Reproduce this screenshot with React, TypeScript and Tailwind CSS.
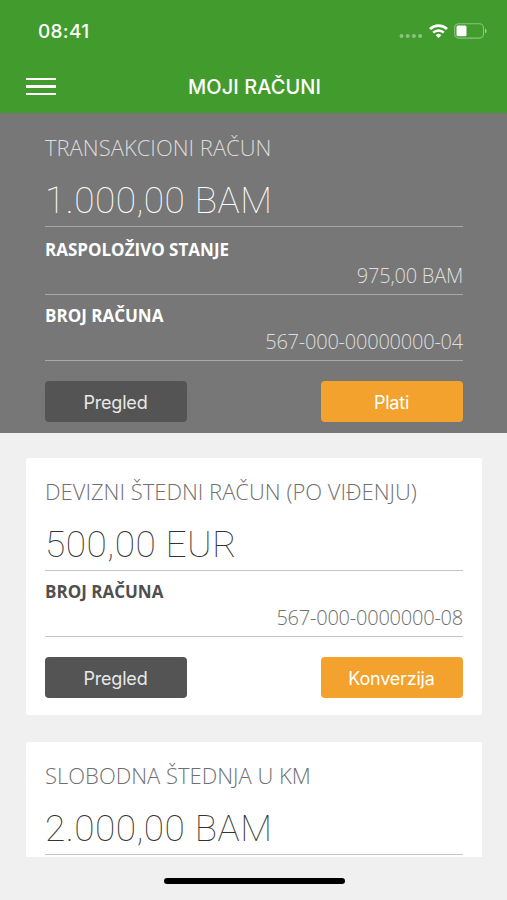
import type { ReactNode } from "react";
import clsx from "clsx";

interface Detail {
  label: string;
  value: string;
}

interface Account {
  name: string;
  balance: string;
  details: Detail[];
  action?: string;
}

const mainAccount: Account = {
  name: "TRANSAKCIONI RAČUN",
  balance: "1.000,00 BAM",
  details: [
    { label: "RASPOLOŽIVO STANJE", value: "975,00 BAM" },
    { label: "BROJ RAČUNA", value: "567-000-00000000-04" },
  ],
  action: "Plati",
};

const savings: Account[] = [
  {
    name: "DEVIZNI ŠTEDNI RAČUN (PO VIĐENJU)",
    balance: "500,00 EUR",
    details: [{ label: "BROJ RAČUNA", value: "567-000-0000000-08" }],
    action: "Konverzija",
  },
  {
    name: "SLOBODNA ŠTEDNJA U KM",
    balance: "2.000,00 BAM",
    details: [],
  },
];

function StatusBar() {
  return (
    <div className="flex h-[62px] items-center justify-between pr-[20px] pl-[38px]">
      <span className="pt-[2px] font-['Inter',sans-serif] text-[19px] font-medium tracking-[0.3px]">08:41</span>
      <div className="flex items-center">
        <svg className="mr-[6px] h-[14px] w-[24px]" viewBox="0 0 24 14" fill="#fff" opacity="0.4">
          <circle cx="2.5" cy="12" r="2" />
          <circle cx="8.7" cy="12" r="2" />
          <circle cx="14.9" cy="12" r="2" />
          <circle cx="21.1" cy="12" r="2" />
        </svg>
        <svg className="mr-[6px] h-[14px] w-[19px]" viewBox="0 0 19 14" fill="none" stroke="#fff">
          <path d="M1 5.1a12.2 12.2 0 0 1 17 0" strokeWidth="2.8" />
          <path d="M4.2 8.6a7.6 7.6 0 0 1 10.6 0" strokeWidth="2.5" />
          <path d="M9.5 14 6.7 11.2a4 4 0 0 1 5.6 0Z" fill="#fff" stroke="none" />
        </svg>
        <svg className="h-[16px] w-[33px]" viewBox="0 0 33 16" fill="none">
          <rect x="0.7" y="0.7" width="28.8" height="14.4" rx="4" stroke="#fff" strokeOpacity="0.4" strokeWidth="1.1" />
          <rect x="2.5" y="2.5" width="10" height="10.8" rx="1.5" fill="#fff" />
          <path d="M31 5.4v5c2-.8 2-4.2 0-5Z" fill="#fff" fillOpacity="0.5" />
        </svg>
      </div>
    </div>
  );
}

function Header() {
  return (
    <header className="h-[113px] shrink-0 bg-[#419b2d] text-white">
      <StatusBar />
      <div className="grid h-[49px] grid-cols-[1fr_auto_1fr] items-center px-[26px]">
        <button className="flex w-[30px] flex-col gap-[5px]">
          <span className="h-[2.5px] bg-white" />
          <span className="h-[2.5px] bg-white" />
          <span className="h-[2.5px] bg-white" />
        </button>
        <h1 className="pl-[2px] font-['Inter',sans-serif] text-[20px] font-medium tracking-[0.05px]">MOJI RAČUNI</h1>
      </div>
    </header>
  );
}

function ActionButton({ children, className }: { children: ReactNode; className: string }) {
  return (
    <button
      className={clsx(
        "h-[41px] w-[142px] rounded-[4px] pt-[2px] pr-[1px] font-['Inter',sans-serif] text-[18px] tracking-[-0.2px]",
        className,
      )}>
      {children}
    </button>
  );
}

function AccountDetails({ account, dark }: { account: Account; dark?: boolean }) {
  const line = dark ? "border-[#a8a8a8]" : "border-[#c4c4c4]";
  return (
    <>
      <h2
        className={clsx(
          "font-['Open_Sans',sans-serif] text-[22px] leading-[30px] font-light whitespace-nowrap",
          dark ? "text-[#dcdcdc]" : "text-[#6f6f6f]",
        )}>
        {account.name}
      </h2>
      <div
        className={clsx(
          "border-b pt-[14px] pb-[1px] font-['Roboto',sans-serif] text-[37px] leading-[49px] font-thin tracking-[0.5px] whitespace-nowrap",
          line,
          dark ? "text-white" : "text-[#333333]",
        )}>
        {account.balance}
      </div>
      {account.details.map((a, i) => (
        <div
          key={a.label}
          className={clsx("border-b font-['Open_Sans',sans-serif]", line, dark && i === 0 ? "pt-[11px]" : "pt-[9px]")}>
          <div className={clsx("text-[17px] leading-[24px] font-bold", dark ? "text-white" : "text-[#4f4f4f]")}>
            {a.label}
          </div>
          <div
            className={clsx(
              "pb-[4px] text-right text-[20px] leading-[28px] font-light tracking-[-0.22px]",
              dark ? "text-[#dedede]" : "text-[#6f6f6f]",
            )}>
            {a.value}
          </div>
        </div>
      ))}
      {account.action && (
        <div className="flex justify-between pt-[20px]">
          <ActionButton className="bg-[#545454] text-[#e8e8e8]">Pregled</ActionButton>
          <ActionButton className="bg-[#f2a22d] text-white">{account.action}</ActionButton>
        </div>
      )}
    </>
  );
}

export default function App() {
  return (
    <div className="flex h-[900px] w-[507px] flex-col overflow-hidden bg-[#f0f0f0]">
      <Header />
      <section className="h-[320px] shrink-0 bg-[#777777] pt-[19px] pr-[44px] pl-[45px]">
        <AccountDetails account={mainAccount} dark />
      </section>
      <div className="flex h-[424px] shrink-0 flex-col gap-[27px] overflow-hidden pt-[25px] pr-[25px] pl-[26px]">
        {savings.map(a => (
          <section key={a.name} className="rounded-[2px] bg-white px-[19px] pt-[18px] pb-[17px]">
            <AccountDetails account={a} />
          </section>
        ))}
      </div>
      <div className="flex justify-center pt-[21px] pl-px">
        <div className="h-[6px] w-[181px] rounded-full bg-black" />
      </div>
    </div>
  );
}
